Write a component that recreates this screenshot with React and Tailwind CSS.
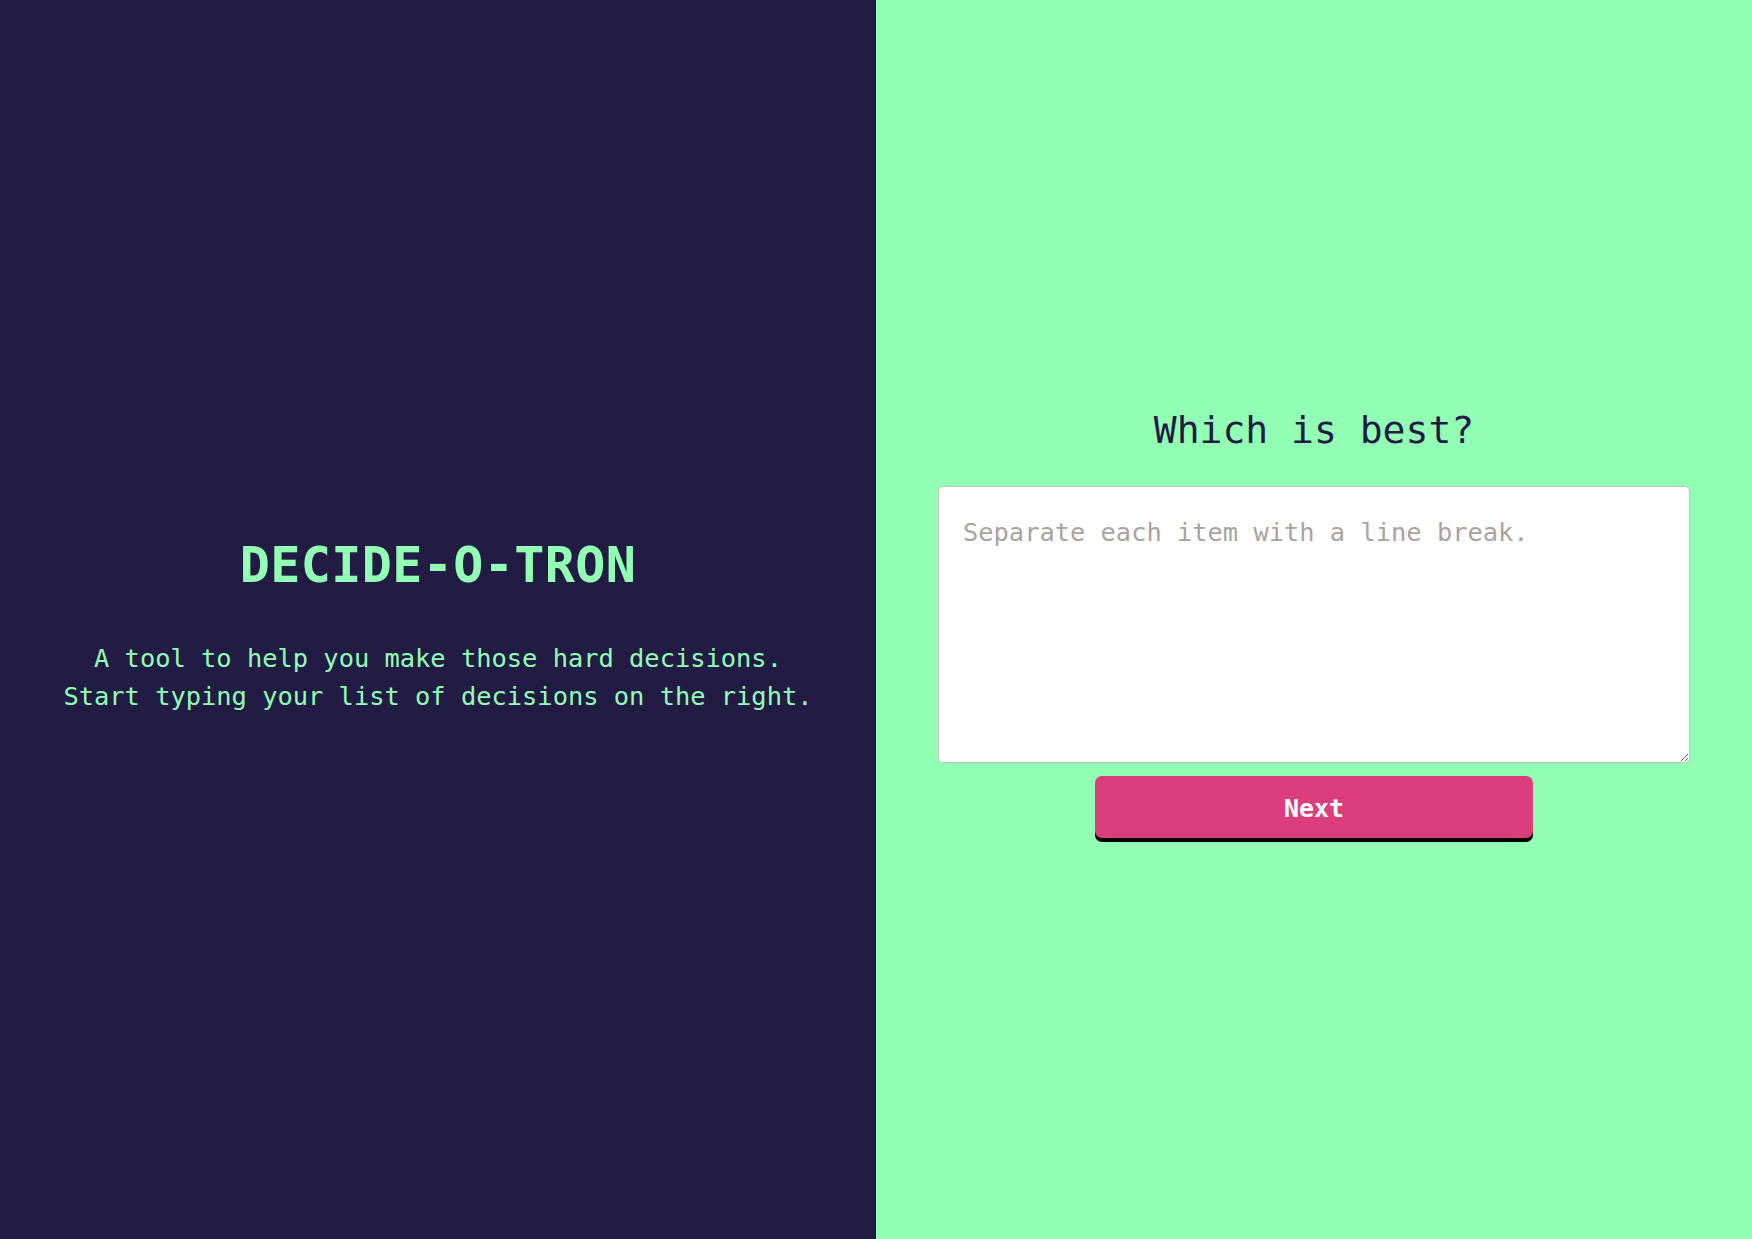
import React, { useState } from 'react';

const mono = { fontFamily: '"DejaVu Sans Mono", "Liberation Mono", monospace' };

const App = () => {
  const [items, setItems] = useState('');

  return (
    <div className="flex w-full h-[1239px]" style={mono}>
      {/* Left: intro */}
      <div className="w-1/2 h-full bg-[#221c44] flex flex-col items-center justify-center pt-[10px]">
        <h1 className="text-[50px] leading-[60px] font-bold text-[#93ffb4] tracking-[0.4px]">
          DECIDE-O-TRON
        </h1>
        <p className="mt-[44px] text-center text-[25.4px] leading-[38px] text-[#93ffb4]">
          A tool to help you make those hard decisions.
          <br />
          Start typing your list of decisions on the right.
        </p>
      </div>

      {/* Right: input */}
      <div className="w-1/2 h-full bg-[#93ffb4] flex flex-col items-center justify-center px-[62px] pt-[6px]">
        <h2 className="text-[38px] leading-[46px] text-[#221c44]">Which is best?</h2>
        <textarea
          value={items}
          onChange={e => setItems(e.target.value)}
          placeholder="Separate each item with a line break."
          className="mt-[33px] w-full h-[277px] bg-white border border-[#c4c0c8] rounded-[5px] p-[24px] pt-[26px] text-[25.4px] leading-[38px] text-[#221c44] placeholder:text-[#aaa3a0] outline-none"
          style={mono}
        />
        <button
          className="mt-[13px] w-[438px] h-[62px] pt-[3px] bg-[#dc3d7c] rounded-[7px] shadow-[0_4px_0_#000] text-white text-[25px] font-bold"
          style={mono}
        >
          Next
        </button>
      </div>
    </div>
  );
};

export default App;
